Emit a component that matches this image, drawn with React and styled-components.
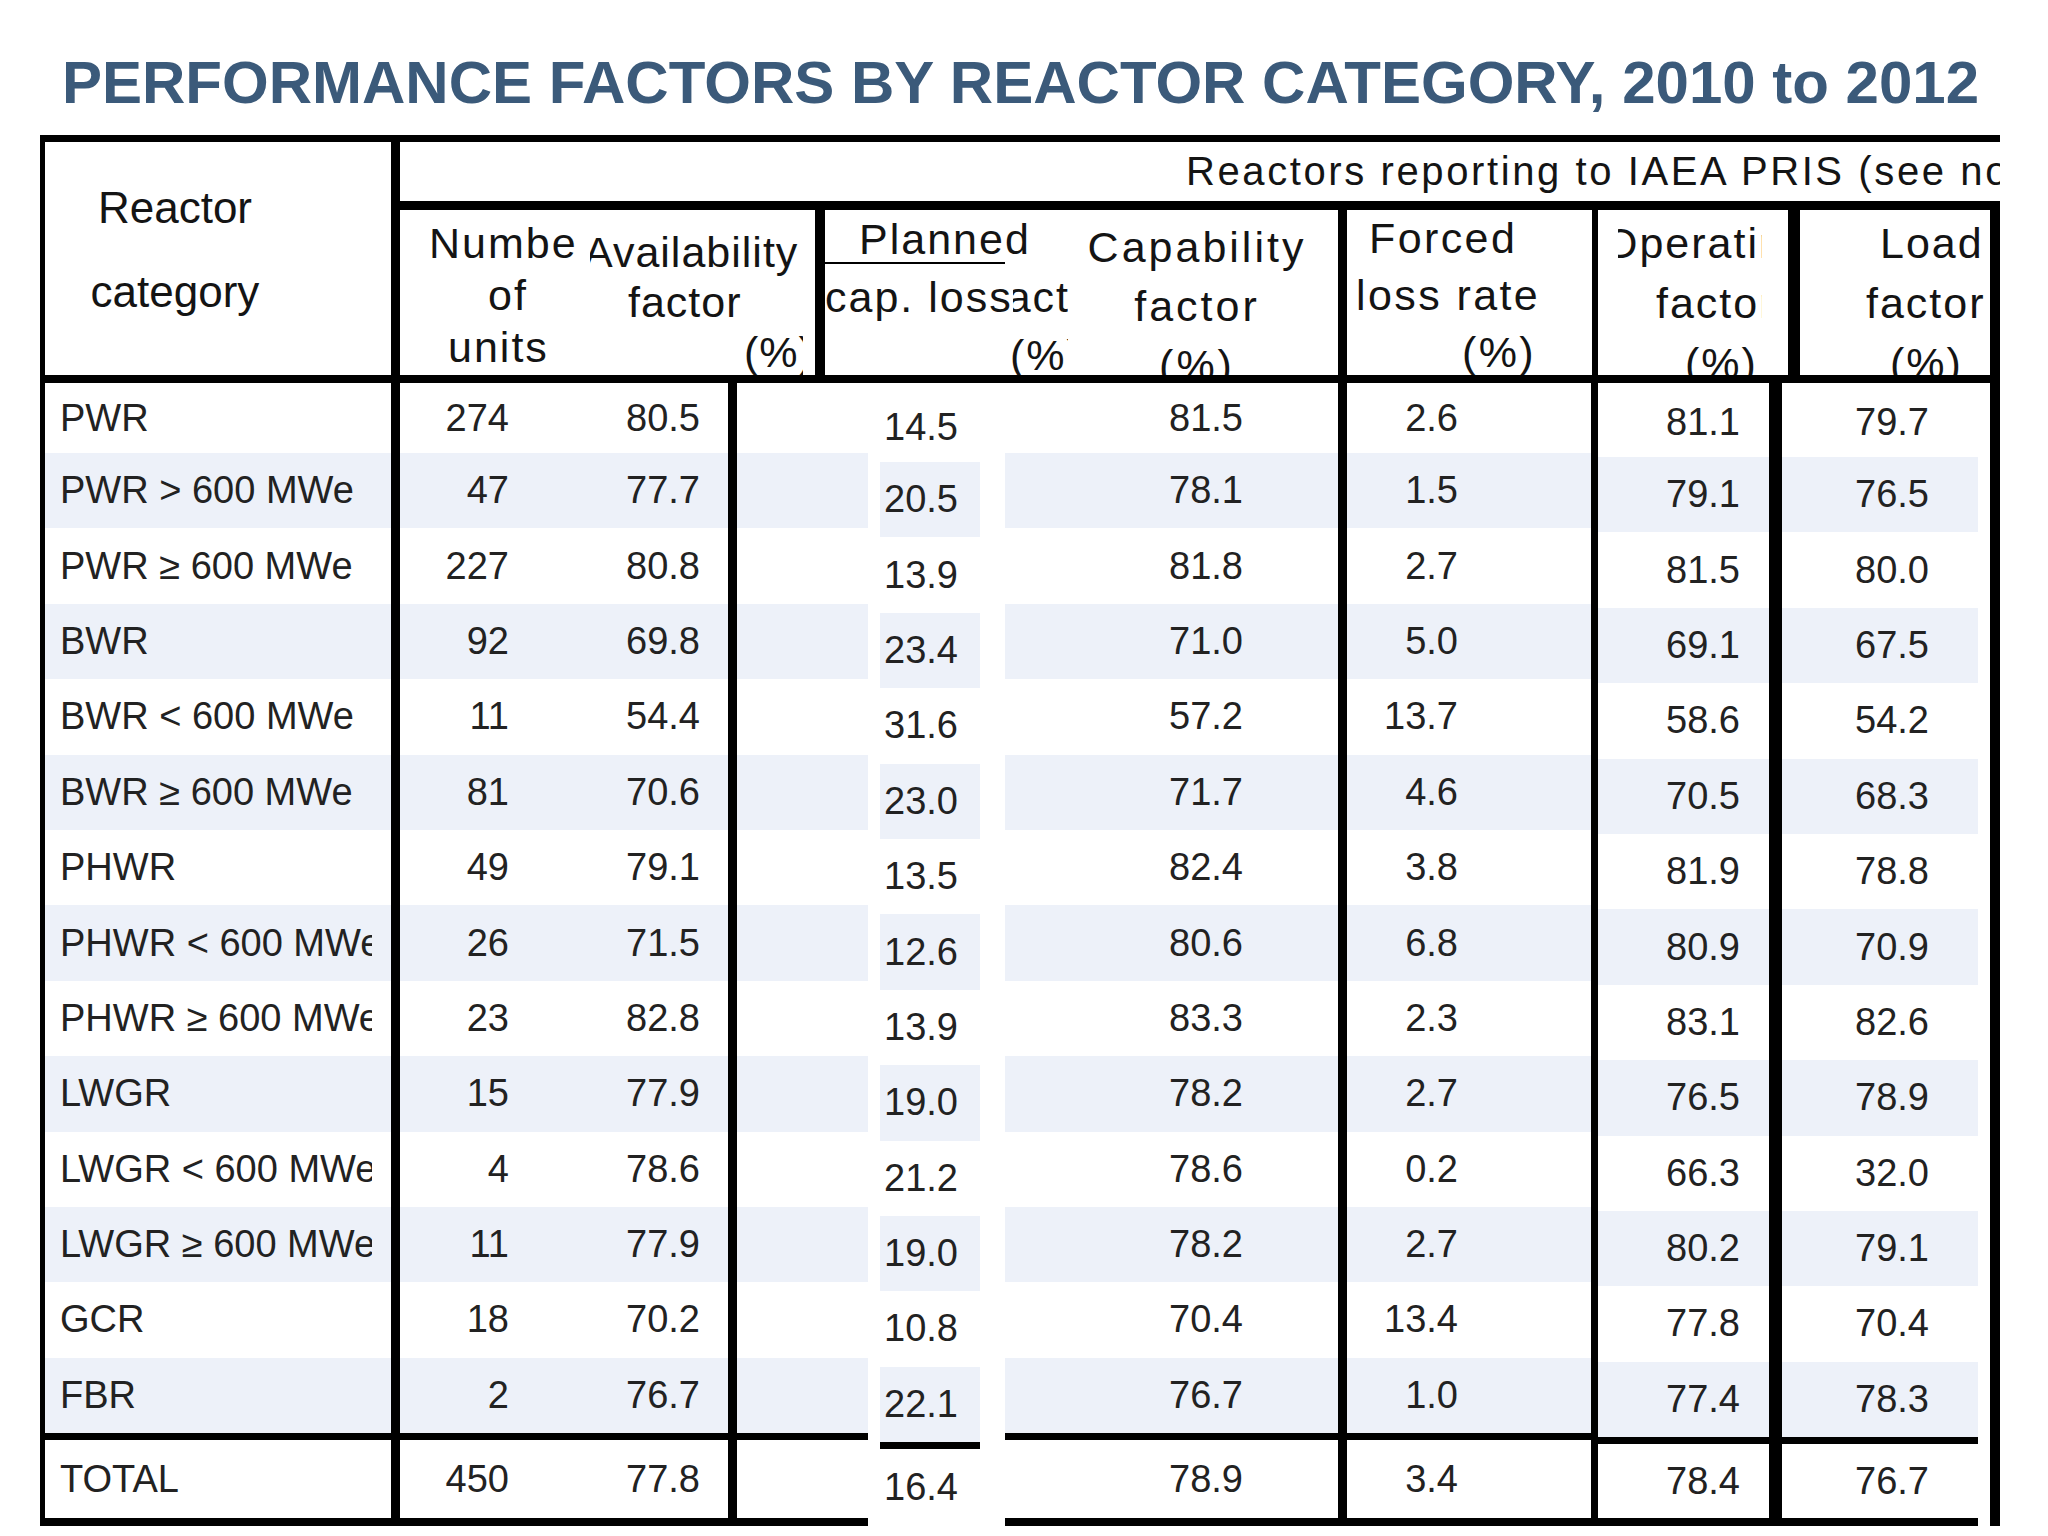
import React from "react";
import styled, { createGlobalStyle, css } from "styled-components";

const rows = [
  ["PWR", "274", "80.5", "14.5", "81.5", "2.6", "81.1", "79.7"],
  ["PWR > 600 MWe", "47", "77.7", "20.5", "78.1", "1.5", "79.1", "76.5"],
  ["PWR ≥ 600 MWe", "227", "80.8", "13.9", "81.8", "2.7", "81.5", "80.0"],
  ["BWR", "92", "69.8", "23.4", "71.0", "5.0", "69.1", "67.5"],
  ["BWR < 600 MWe", "11", "54.4", "31.6", "57.2", "13.7", "58.6", "54.2"],
  ["BWR ≥ 600 MWe", "81", "70.6", "23.0", "71.7", "4.6", "70.5", "68.3"],
  ["PHWR", "49", "79.1", "13.5", "82.4", "3.8", "81.9", "78.8"],
  ["PHWR < 600 MWe", "26", "71.5", "12.6", "80.6", "6.8", "80.9", "70.9"],
  ["PHWR ≥ 600 MWe", "23", "82.8", "13.9", "83.3", "2.3", "83.1", "82.6"],
  ["LWGR", "15", "77.9", "19.0", "78.2", "2.7", "76.5", "78.9"],
  ["LWGR < 600 MWe", "4", "78.6", "21.2", "78.6", "0.2", "66.3", "32.0"],
  ["LWGR ≥ 600 MWe", "11", "77.9", "19.0", "78.2", "2.7", "80.2", "79.1"],
  ["GCR", "18", "70.2", "10.8", "70.4", "13.4", "77.8", "70.4"],
  ["FBR", "2", "76.7", "22.1", "76.7", "1.0", "77.4", "78.3"],
];

const total = ["TOTAL", "450", "77.8", "16.4", "78.9", "3.4", "78.4", "76.7"];

// body column groups, widths in px (they add up to the table width)
const groups = [
  { key: "cat", w: 360, bl: 5, br: 9, cells: [{ i: 0, w: 327, align: "flex-start", pl: 15 }] },
  { key: "ua", w: 337, br: 9, cells: [{ i: 1, w: 140, pr: 31 }, { i: 2, w: 188, pr: 28 }] },
  { key: "gap", w: 131, cells: [] },
  { key: "planned", w: 137, pl: 12, pr: 25, offset: 9, open: true, cells: [{ i: 3, w: 100, pr: 22 }] },
  { key: "cap", w: 342, br: 9, cells: [{ i: 4, w: 333, pr: 95 }] },
  { key: "forced", w: 251, br: 7, cells: [{ i: 5, w: 244, pr: 133 }] },
  { key: "op", w: 184, br: 13, offset: 4, cells: [{ i: 6, w: 171, pr: 29 }] },
  { key: "load", w: 218, pr: 12, br: 10, offset: 4, cells: [{ i: 7, w: 196, pr: 49 }] },
];

const heads = [
  {
    key: "units", w: 178, pt: 7, lh: 52, ls: 2,
    lines: [{ t: "Number", x: 29 }, { t: "of", x: 88 }, { t: "units", x: 48 }],
  },
  {
    key: "avail", w: 247, br: 10, pl: 12, pr: 12, pt: 17, lh: 50, ls: 1,
    lines: [{ t: "Availability", x: -6 }, { t: "factor", x: 38 }, { t: "(%)", x: 154 }],
  },
  {
    key: "planned", w: 243, pt: 0, lh: 58, ls: 2,
    lines: [{ t: "Planned", x: 34, rule: true }, { loss: true, x: 0 }, { t: "(%)", x: 185 }],
  },
  {
    key: "cap", w: 279, br: 9, pr: 12, pt: 8, lh: 59, ls: 3, center: true,
    lines: [{ t: "Capability", x: 0 }, { t: "factor", x: 0 }, { t: "(%)", x: 0 }],
  },
  {
    key: "forced", w: 251, br: 6, pt: 0, lh: 57, ls: 2.4,
    lines: [{ t: "Forced", x: 22 }, { t: "loss rate", x: 9 }, { t: "(%)", x: 115 }],
  },
  {
    key: "op", w: 202, br: 12, pl: 20, pr: 26, pt: 3, lh: 60, ls: 2,
    lines: [{ t: "Operating", x: -14 }, { t: "factor", x: 38 }, { t: "(%)", x: 67 }],
  },
  {
    key: "load", w: 200, br: 10, pt: 3, lh: 60, ls: 2,
    lines: [{ t: "Load", x: 80 }, { t: "factor", x: 66 }, { t: "(%)", x: 90 }],
  },
];

const rowHeight = (i) => (i === 0 ? 70 : 75.4);

export default function App() {
  return (
    <>
      <GlobalStyle />
      <Page>
        <Title>PERFORMANCE FACTORS BY REACTOR CATEGORY, 2010 to 2012</Title>
        <Table>
          <HeadRow>
            <HeadCat>
              <div>Reactor</div>
              <div>category</div>
            </HeadCat>
            <HeadRight>
              <SpanCell>Reactors reporting to IAEA PRIS (see notes)</SpanCell>
              <SubRow>
                {heads.map((h) => (
                  <SubCell
                    key={h.key}
                    $w={h.w}
                    $br={h.br || 0}
                    $pl={h.pl || 0}
                    $pr={h.pr || 0}
                    $pt={h.pt}
                    $lh={h.lh}
                    $ls={h.ls}
                    $center={h.center}
                  >
                    {h.lines.map((l, n) => (
                      <SubLine key={n} $x={l.x} $rule={l.rule}>
                        {l.loss ? (
                          <>
                            <LossPart>cap. loss</LossPart>
                            <FactorPart>factor</FactorPart>
                          </>
                        ) : (
                          l.t
                        )}
                      </SubLine>
                    ))}
                  </SubCell>
                ))}
              </SubRow>
            </HeadRight>
          </HeadRow>

          <Body>
            {groups.map((g) => {
              const cols = g.cells.length ? g.cells.map((c) => `${c.w}px`).join(" ") : "none";
              const offset = g.offset || 0;
              return (
                <Group
                  key={g.key}
                  $w={g.w}
                  $bl={g.bl || 0}
                  $br={g.br || 0}
                  $pl={g.pl || 0}
                  $pr={g.pr || 0}
                  $offset={offset}
                >
                  {rows.map((r, i) => (
                    <DataRow key={i} $h={rowHeight(i)} $cols={cols} $shade={i % 2 === 1}>
                      {g.cells.map((c) => (
                        <Cell key={c.i} $align={c.align || "flex-end"} $pl={c.pl || 0} $pr={c.pr || 0}>
                          {r[c.i]}
                        </Cell>
                      ))}
                    </DataRow>
                  ))}
                  <Separator />
                  <TotalRow $h={86 - offset} $cols={cols} $open={g.open}>
                    {g.cells.map((c) => (
                      <Cell key={c.i} $align={c.align || "flex-end"} $pl={c.pl || 0} $pr={c.pr || 0}>
                        {total[c.i]}
                      </Cell>
                    ))}
                  </TotalRow>
                </Group>
              );
            })}
          </Body>
        </Table>
      </Page>
    </>
  );
}

// ─── STYLES ─────────────────────────────────────────────────────────────

const GlobalStyle = createGlobalStyle`
  *, *::before, *::after {
    box-sizing: border-box;
  }
  html, body {
    margin: 0;
    padding: 0;
    background: #ffffff;
  }
  body {
    font-family: "Liberation Sans", Arial, sans-serif;
    color: #1c1c1c;
  }
`;

const Page = styled.div`
  padding: 53px 0 20px 40px;
`;

const Title = styled.h1`
  margin: 0 0 23px;
  padding-left: 22px;
  font-family: "Liberation Sans", Arial, sans-serif;
  font-weight: 700;
  font-size: 60px;
  line-height: 59px;
  color: #3b5a7a;
  white-space: nowrap;
`;

const Table = styled.div`
  width: 1960px;
  border-top: 7px solid #000;
`;

const HeadRow = styled.div`
  display: flex;
  border-bottom: 8px solid #000;
`;

const HeadCat = styled.div`
  flex: none;
  width: 360px;
  border-left: 5px solid #000;
  border-right: 9px solid #000;
  padding: 24px 86px 0 0;
  text-align: center;
  font-size: 44px;
  line-height: 84px;
  color: #141414;
`;

const HeadRight = styled.div`
  flex: 1;
  min-width: 0;
  display: flex;
  flex-direction: column;
`;

const SpanCell = styled.div`
  height: 68px;
  border-bottom: 9px solid #000;
  padding-left: 786px;
  font-size: 40px;
  letter-spacing: 2.6px;
  line-height: 59px;
  white-space: nowrap;
  overflow: hidden;
  color: #141414;
`;

const SubRow = styled.div`
  display: flex;
  height: 165px;
`;

const SubCell = styled.div`
  flex: none;
  width: ${(p) => p.$w}px;
  border-right: ${(p) => p.$br}px solid #000;
  padding: ${(p) => p.$pt}px ${(p) => p.$pr}px 0 ${(p) => p.$pl}px;
  font-size: 43px;
  letter-spacing: ${(p) => p.$ls}px;
  line-height: ${(p) => p.$lh}px;
  text-align: ${(p) => (p.$center ? "center" : "left")};
  overflow: hidden;
  color: #141414;
`;

const SubLine = styled.div`
  position: relative;
  white-space: nowrap;
  overflow: hidden;
  text-indent: ${(p) => p.$x}px;

  ${(p) =>
    p.$rule &&
    css`
      &::after {
        content: "";
        position: absolute;
        left: 0;
        bottom: 4px;
        width: 180px;
        height: 2px;
        background: #000;
      }
    `}
`;

const LossPart = styled.span`
  position: relative;
  z-index: 1;
  background: #ffffff;
`;

const FactorPart = styled.span`
  margin-left: -20px;
`;

const Body = styled.div`
  display: flex;
`;

const Group = styled.div`
  flex: none;
  width: ${(p) => p.$w}px;
  display: flex;
  flex-direction: column;
  padding: ${(p) => p.$offset}px ${(p) => p.$pr}px 0 ${(p) => p.$pl}px;
  border-left: ${(p) => p.$bl}px solid #000;
  border-right: ${(p) => p.$br}px solid #000;
`;

const DataRow = styled.div`
  flex: none;
  height: ${(p) => p.$h}px;
  display: grid;
  grid-template-columns: ${(p) => p.$cols};
  background: ${(p) => (p.$shade ? "#edf1f9" : "transparent")};
`;

const Cell = styled.div`
  display: flex;
  align-items: center;
  justify-content: ${(p) => p.$align};
  padding: 0 ${(p) => p.$pr}px 0 ${(p) => p.$pl}px;
  font-size: 38px;
  color: #222;
  white-space: nowrap;
  overflow: hidden;
`;

const Separator = styled.div`
  flex: none;
  height: 7px;
  background: #000;
`;

const TotalRow = styled(DataRow)`
  border-bottom: ${(p) => (p.$open ? 0 : 8)}px solid #000;
`;
